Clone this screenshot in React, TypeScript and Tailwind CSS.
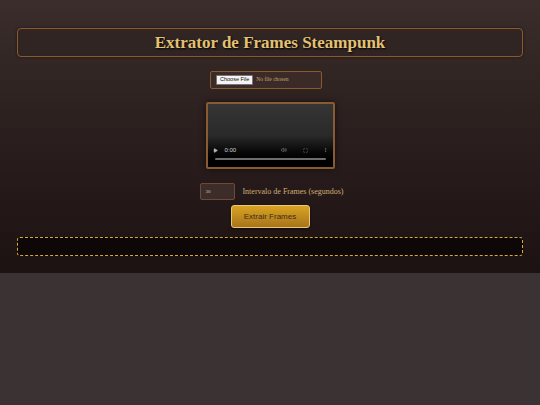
import { Play, Volume2, Maximize, MoreVertical } from 'lucide-react';

const serif = { fontFamily: '"Liberation Serif", "DejaVu Serif", serif' };
const sans = { fontFamily: '"Liberation Sans", Arial, sans-serif' };

function FakeVideo() {
  return (
    <div className="w-[129px] h-[67px] border-2 border-[#8a5a30] rounded-[2px] shadow-[0_0_6px_rgba(0,0,0,0.6)] bg-black">
      <div className="h-full flex flex-col justify-end bg-gradient-to-b from-[#353535] via-[#2a2a2a] to-[#000] px-[5px] pb-[7px]">
        <div className="flex items-center text-[#cfcfcf]">
          <Play className="w-[5px] h-[5px] fill-[#bbb] stroke-[#bbb]" />
          <span className="ml-[7px] text-[6px] leading-none" style={sans}>
            0:00
          </span>
          <div className="flex-1" />
          <Volume2 className="w-[6px] h-[6px] stroke-[#999]" />
          <Maximize className="ml-[16px] w-[5px] h-[5px] stroke-[#888]" />
          <MoreVertical className="ml-[15px] w-[5px] h-[6px] stroke-[#888]" />
        </div>
        <div className="mt-[5px] mx-[2px] h-[2px] rounded-full bg-[#6e6e6e]" />
      </div>
    </div>
  );
}

export default function App() {
  return (
    <div className="min-h-[405px] bg-[#3b3333]">
      <div
        className="bg-gradient-to-b from-[#3a2d2c] to-[#1c1211] px-[17px] pt-[28px] pb-[17px]"
        style={serif}
      >
        <div className="h-[29px] rounded-[4px] border border-[#8b5a2b] shadow-[0_0_3px_rgba(0,0,0,0.5)] bg-[#2e2322]/60 flex items-center justify-center">
          <h1 className="text-[17px] font-bold text-[#e2c273] [text-shadow:1px_1px_2px_rgba(0,0,0,1)] leading-none">
            Extrator de Frames Steampunk
          </h1>
        </div>

        <div className="flex justify-center mt-[14px] pr-[8px]">
          <div className="w-[112px] h-[18px] border border-[#8b5a2b] rounded-[2px] bg-[#3a2b29] flex items-center px-[5px]">
            <span
              className="bg-[#f4f4f4] border border-[#777] text-[#111] text-[5.5px] leading-none px-[3px] py-[1px] rounded-[1px]"
              style={sans}
            >
              Choose File
            </span>
            <span className="ml-[3px] text-[5.5px] text-[#c9a66b] leading-none">No file chosen</span>
          </div>
        </div>

        <div className="flex justify-center mt-[13px]">
          <FakeVideo />
        </div>

        <div className="flex justify-center items-center mt-[14px] gap-[7px] pl-[4px]">
          <div className="w-[35px] h-[17px] border border-[#6e4a32] rounded-[2px] bg-[#3c2c2a] flex items-center px-[4px]">
            <span className="text-[5px] text-[#d9c9a8] leading-none">30</span>
          </div>
          <span className="text-[8px] text-[#cfae74] leading-none">Intervalo de Frames (segundos)</span>
        </div>

        <div className="flex justify-center mt-[5px]">
          <button
            className="w-[79px] h-[23px] rounded-[3px] border border-[#e8c77a] bg-gradient-to-b from-[#d9a421] to-[#a8741c] text-[#3f2c1a] text-[8px] shadow-[0_1px_3px_rgba(0,0,0,0.6)]"
            style={sans}
          >
            Extrair Frames
          </button>
        </div>

        <div className="mt-[9px] h-[19px] rounded-[3px] border border-dashed border-[#d8a93a] bg-[#0d0807]" />
      </div>
    </div>
  );
}
